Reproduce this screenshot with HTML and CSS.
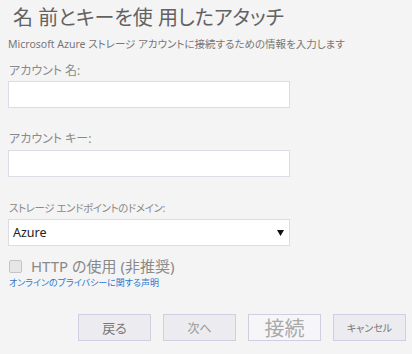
FILE: index.html
```html
<!DOCTYPE html>
<html lang="ja">
<head>
<meta charset="utf-8">
<link rel="stylesheet" href="styles.css">
</head>
<body>
<div class="page">
  <h1 class="title">名 前とキーを使 用したアタッチ</h1>
  <p class="subtitle">Microsoft Azure ストレージ アカウントに接続するための情報を入力します</p>

  <label class="label first">アカウント 名:</label>
  <div class="field"></div>

  <label class="label">アカウント キー:</label>
  <div class="field"></div>

  <label class="label small">ストレージ エンドポイントのドメイン:</label>
  <div class="field select">
    <span class="select-value">Azure</span>
    <svg class="arrow" width="7" height="6" viewBox="0 0 7 6"><path d="M0 0H7L3.5 6Z" fill="#111"/></svg>
  </div>

  <div class="check-row">
    <span class="checkbox"></span>
    <span class="check-text">HTTP の使用 (非推奨)</span>
  </div>
  <a class="link">オンラインのプライバシーに関する声明</a>

  <div class="buttons">
    <div class="btn btn-back">戻る</div>
    <div class="btn btn-next">次へ</div>
    <div class="btn btn-connect">接続</div>
    <div class="btn btn-cancel">キャンセル</div>
  </div>
</div>
</body>
</html>
```
FILE: styles.css
```css
html, body {
  margin: 0;
  padding: 0;
  background: #f4f4f4;
}
body {
  font-family: "Noto Sans", "Noto Sans CJK JP", sans-serif;
  font-feature-settings: "palt";
  width: 412px;
  height: 354px;
  overflow: hidden;
}
.page {
  padding: 0 0 0 8px;
  display: flex;
  flex-direction: column;
  align-items: flex-start;
}
.title {
  margin: 0 0 0 5px;
  font-size: 20px;
  font-weight: normal;
  line-height: 36px;
  color: #626262;
}
.subtitle {
  margin: 0;
  font-size: 10.5px;
  line-height: 16px;
  color: #777;
}
.label {
  display: block;
  margin: 22px 0 2px 1px;
  font-size: 12px;
  line-height: 18px;
  color: #8a8a8a;
}
.label.first {
  margin-top: 10px;
  margin-bottom: 1px;
}
.label.small {
  font-size: 10.5px;
  letter-spacing: -0.4px;
}
.field {
  box-sizing: border-box;
  width: 282px;
  height: 27px;
  background: #fff;
  border: 1px solid #dcdbe6;
}
.select {
  display: flex;
  align-items: center;
  justify-content: space-between;
  padding: 0 5px 0 4px;
}
.select-value {
  font-size: 12.5px;
  color: #222;
}
.arrow {
  display: block;
}
.check-row {
  margin-top: 11px;
  height: 18px;
  display: flex;
  align-items: center;
  gap: 9px;
}
.checkbox {
  box-sizing: border-box;
  width: 13px;
  height: 13px;
  margin-left: 1px;
  border: 1px solid #c4c4c4;
  border-radius: 2px;
  background: #e6e6e6;
}
.check-text {
  font-size: 15px;
  line-height: 18px;
  color: #8a8a8a;
}
.link {
  display: block;
  margin-top: 2px;
  font-size: 9px;
  line-height: 12px;
  color: #2b78cf;
  margin-left: 1px;
}
.buttons {
  align-self: stretch;
  margin-top: 25px;
  padding-right: 6px;
  display: flex;
  justify-content: flex-end;
  gap: 12px;
}
.btn {
  box-sizing: border-box;
  width: 73px;
  height: 27px;
  border: 1px solid #d0cee0;
  background: #ebebf0;
  display: flex;
  align-items: center;
  justify-content: center;
  color: #777;
}
.btn-back { font-size: 13px; }
.btn-next { font-size: 12px; color: #999; }
.btn-connect {
  font-size: 20px;
  color: #aaa;
  background: #f6f6f8;
}
.btn-cancel { font-size: 10px; }
```
